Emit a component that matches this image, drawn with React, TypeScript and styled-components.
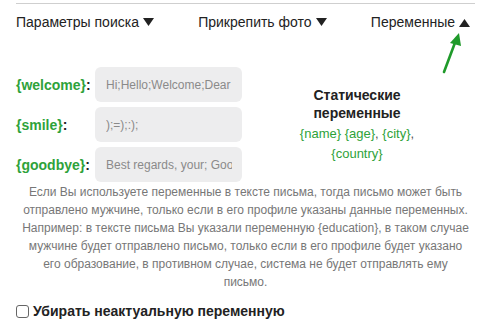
import styled, { createGlobalStyle } from "styled-components";

const GlobalStyle = createGlobalStyle`
    body {
        margin: 0;
        background: #fff;
        font-family: "Liberation Sans", Arial, sans-serif;
    }
`;

const green = "#2ea23a";

const Page = styled.div`
    width: 459px;
    padding: 3px 15px 0 16px;
    position: relative;
`;

const Divider = styled.div`
    height: 1px;
    background: #cfcfcf;
`;

const TabsRow = styled.nav`
    display: flex;
    justify-content: space-between;
    padding-right: 5px;
    margin-top: 9px;
`;

const Tab = styled.button`
    display: flex;
    align-items: center;
    gap: 4px;
    padding: 0;
    border: none;
    background: none;
    font-family: inherit;
    font-size: 14px;
    line-height: 18px;
    color: #222;
    cursor: pointer;
`;

const Caret = styled.svg<{ $up?: boolean }>`
    width: 11px;
    height: 8px;
    margin-top: ${(p) => (p.$up ? "2px" : "-1px")};
    transform: ${(p) => (p.$up ? "rotate(180deg)" : "none")};
`;

const Pointer = styled.svg`
    position: absolute;
    left: 436px;
    top: 30px;
    width: 30px;
    height: 46px;
`;

const VarsSection = styled.section`
    display: flex;
    margin-top: 36px;
`;

const Fields = styled.div`
    display: flex;
    flex-direction: column;
    gap: 5px;
`;

const FieldRow = styled.label`
    display: flex;
    align-items: center;
`;

const FieldName = styled.span`
    width: 79px;
    font-size: 14px;
    font-weight: bold;
    color: #222;

    b {
        color: ${green};
    }
`;

const FieldInput = styled.input`
    width: 147px;
    height: 35px;
    box-sizing: border-box;
    padding: 0 10px 0 11px;
    border: none;
    border-radius: 6px;
    background: #ededee;
    font-family: inherit;
    font-size: 12px;
    color: #8a8a8a;
    outline: none;
`;

const StaticVars = styled.div`
    flex: 1;
    padding-top: 19px;
    padding-right: 3px;
    text-align: center;
`;

const StaticTitle = styled.div`
    font-size: 14px;
    font-weight: bold;
    line-height: 18px;
    color: #222;
`;

const StaticList = styled.div`
    margin-top: 2px;
    font-size: 13px;
    line-height: 20px;
    color: ${green};

    span {
        color: #555;
    }
`;

const Note = styled.p`
    margin: 1px 0 0;
    font-size: 12px;
    line-height: 18px;
    color: #777;
    text-align: center;
`;

const CheckRow = styled.label`
    display: flex;
    align-items: center;
    gap: 4px;
    margin-top: 11px;
    font-size: 14px;
    font-weight: bold;
    line-height: 18px;
    color: #222;
`;

const Check = styled.input`
    appearance: none;
    width: 13px;
    height: 13px;
    margin: 0;
    border: 1px solid #666;
    border-radius: 3px;
    background: #fff;
`;

const fields = [
    { name: "welcome", value: "Hi;Hello;Welcome;Dear" },
    { name: "smile", value: ");=);:);" },
    { name: "goodbye", value: "Best regards, your; Good bye" },
];

const noteLines = [
    "Если Вы используете переменные в тексте письма, тогда письмо может быть",
    "отправлено мужчине, только если в его профиле указаны данные переменных.",
    "Например: в тексте письма Вы указали переменную {education}, в таком случае",
    "мужчине будет отправлено письмо, только если в его профиле будет указано",
    "его образование, в противном случае, система не будет отправлять ему",
    "письмо.",
];

const CaretIcon = ({ up }: { up?: boolean }) => (
    <Caret $up={up} viewBox="0 0 11 8">
        <path d="M0 0h11L5.5 8z" fill="#222" />
    </Caret>
);

const App = () => {
    return (
        <Page>
            <GlobalStyle />
            <Divider />
            <TabsRow>
                <Tab>
                    Параметры поиска
                    <CaretIcon />
                </Tab>
                <Tab>
                    Прикрепить фото
                    <CaretIcon />
                </Tab>
                <Tab>
                    Переменные
                    <CaretIcon up />
                </Tab>
            </TabsRow>
            <Pointer viewBox="0 0 30 46">
                <path d="M8 42L20 10" stroke="#1f9a2a" strokeWidth="2.6" strokeLinecap="round" />
                <path d="M23 3L14 13L25 16z" fill="#1f9a2a" />
            </Pointer>
            <VarsSection>
                <Fields>
                    {fields.map((f) => (
                        <FieldRow key={f.name}>
                            <FieldName>
                                <b>{`{${f.name}}`}</b>:
                            </FieldName>
                            <FieldInput defaultValue={f.value} />
                        </FieldRow>
                    ))}
                </Fields>
                <StaticVars>
                    <StaticTitle>
                        Статические
                        <br />
                        переменные
                    </StaticTitle>
                    <StaticList>
                        {"{name} {age}"}<span>,</span> {"{city}"}<span>,</span>
                        <br />
                        {"{country}"}
                    </StaticList>
                </StaticVars>
            </VarsSection>
            <Note>
                {noteLines.map((line, i) => (
                    <span key={i}>
                        {line}
                        {i < noteLines.length - 1 && <br />}
                    </span>
                ))}
            </Note>
            <CheckRow>
                <Check type="checkbox" />
                Убирать неактуальную переменную
            </CheckRow>
        </Page>
    );
};

export default App;
